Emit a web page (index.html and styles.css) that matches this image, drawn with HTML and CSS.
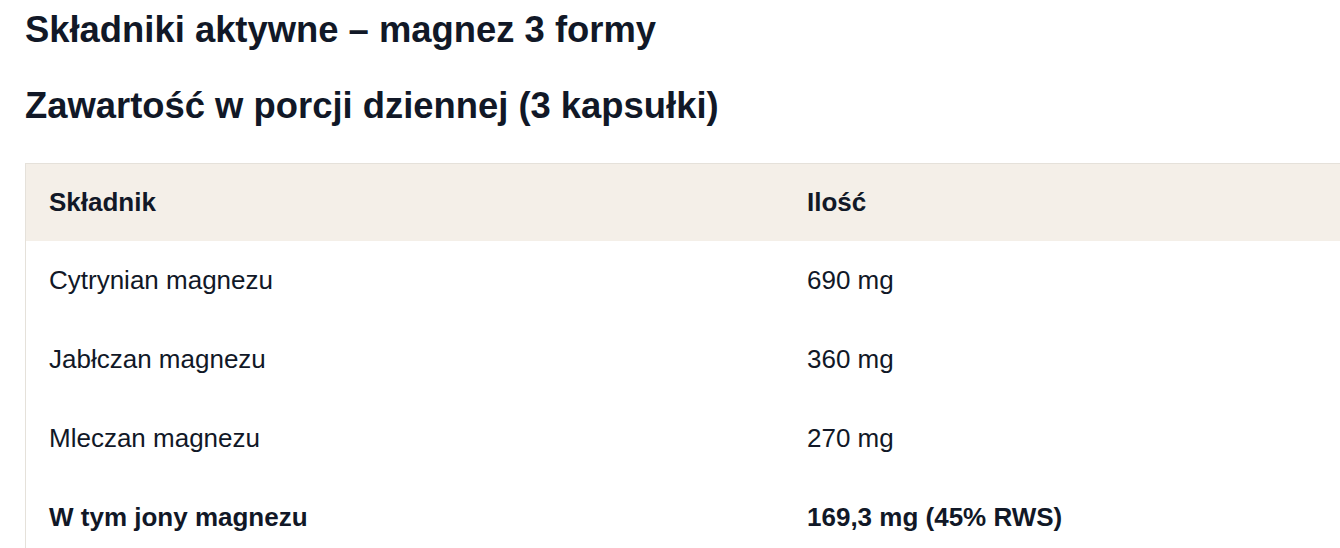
FILE: index.html
```html
<!DOCTYPE html>
<html lang="pl">
<head>
<meta charset="utf-8">
<link rel="stylesheet" href="styles.css">
</head>
<body>
<div class="page">
  <h2 class="title">Składniki aktywne – magnez 3 formy</h2>
  <h2 class="title second">Zawartość w porcji dziennej (3 kapsułki)</h2>
  <table class="facts">
    <thead>
      <tr><th class="col-name">Składnik</th><th>Ilość</th></tr>
    </thead>
    <tbody>
      <tr><td>Cytrynian magnezu</td><td>690 mg</td></tr>
      <tr><td>Jabłczan magnezu</td><td>360 mg</td></tr>
      <tr><td>Mleczan magnezu</td><td>270 mg</td></tr>
      <tr class="total"><td>W tym jony magnezu</td><td>169,3 mg (45% RWS)</td></tr>
    </tbody>
  </table>
</div>
</body>
</html>
```
FILE: styles.css
```css
html, body {
  margin: 0;
  padding: 0;
  background: #ffffff;
}
body {
  font-family: "Liberation Sans", Arial, sans-serif;
  color: #111827;
  overflow: hidden;
}
.page {
  padding: 8px 0 0 25px;
}
.title {
  margin: 0;
  font-size: 36.4px;
  font-weight: 700;
  line-height: 44px;
}
.second {
  margin-top: 32px;
}
.facts {
  margin-top: 35px;
  border-collapse: collapse;
  width: 1340px;
  border-top: 1px solid #e5e1da;
  border-left: 1px solid #e5e1da;
  font-size: 26px;
}
.facts th, .facts td {
  text-align: left;
  padding: 0 0 0 23px;
  height: 79px;
}
.facts th {
  background: #f4efe8;
  font-weight: 700;
  height: 77px;
}
.col-name {
  width: 735px;
}
.total td {
  font-weight: 700;
}
```
